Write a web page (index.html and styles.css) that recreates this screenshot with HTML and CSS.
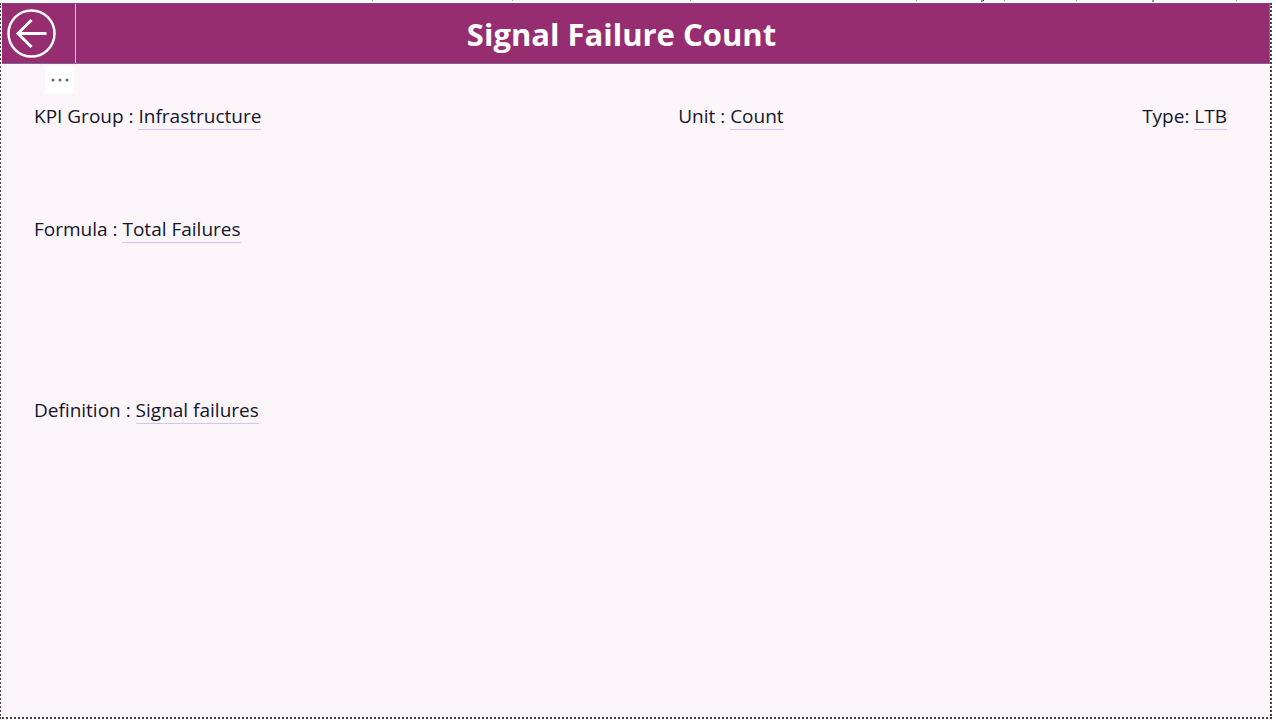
FILE: index.html
```
<!DOCTYPE html>
<html lang="en">
<head>
<meta charset="utf-8">
<meta name="viewport" content="width=device-width, initial-scale=1">
<title>Signal Failure Count</title>
<link rel="stylesheet" href="styles.css">
</head>
<body>

<!-- bottom edge of the toolbar above the report -->
<svg class="toolbar-edge" height="3" aria-hidden="true">
  <path d="M372.5 0v1M512.5 0v1M690.5 0v1M916.5 0v1M1004.5 0v1M1076.5 0v1M1236.5 0v1" stroke="#aaa"/>
  <path d="M984 0l-1 1h-2M1153 0v2" fill="none" stroke="#333"/>
</svg>

<main class="report">
  <header class="banner">
    <button class="back" type="button" aria-label="Back">
      <svg viewBox="0 0 50 50" width="50" height="50" fill="none" stroke="#fff">
        <circle cx="24.5" cy="24.5" r="23" stroke-width="2.5"/>
        <path d="M39.5 24.5H11.5M24.5 11L11 24.5l13.5 13.5" stroke-width="3"/>
      </svg>
    </button>
    <h1>Signal Failure Count</h1>
    <button class="more" type="button" aria-label="More options">
      <svg viewBox="0 0 18 4" width="18" height="4" fill="#666">
        <circle cx="2" cy="2" r="1.5"/>
        <circle cx="9" cy="2" r="1.5"/>
        <circle cx="16" cy="2" r="1.5"/>
      </svg>
    </button>
  </header>

  <section class="details">
    <div class="summary">
      <p>KPI Group : <span class="value">Infrastructure</span></p>
      <p>Unit : <span class="value">Count</span></p>
      <p>Type: <span class="value">LTB</span></p>
    </div>
    <p class="formula">Formula : <span class="value">Total Failures</span></p>
    <p class="definition">Definition : <span class="value">Signal failures</span></p>
  </section>
</main>

</body>
</html>
```

FILE: styles.css
```
* {
  box-sizing: border-box;
}
body {
  display: flex;
  flex-direction: column;
  min-height: 100vh;
  margin: 0;
  background: #fff;
  color: #14142b;
  font: 19px/24px "Open Sans", "Noto Sans", sans-serif;
}
.toolbar-edge {
  display: block;
  width: 100%;
  background: #faf8fc;
}
.report {
  flex: 1;
  margin-right: 4px;
  margin-bottom: 1px;
  margin-left: -1px;
  border: 2px dotted #444;
  border-top: 0;
  background: #fcf6fb;
}
.banner {
  position: relative;
  display: flex;
  align-items: center;
  height: 61px;
  margin-left: 1px;
  border: 1px solid #85649a;
  border-top-color: #7c4a78;
  border-left: 0;
  background: #962d70;
}
.banner h1 {
  flex: 1;
  margin: 0;
  padding-right: 102px;
  color: #fff;
  font-size: 31px;
  font-weight: 700;
  line-height: 40px;
  text-align: center;
}
.back {
  width: 74px;
  height: 100%;
  padding: 0 0 0 5px;
  border: 0;
  border-right: 1px solid #e5c6dc;
  background: none;
  text-align: left;
}
.back svg {
  display: block;
}
/* visual options button, hangs below the back button */
.more {
  position: absolute;
  top: 62px;
  left: 43px;
  display: flex;
  align-items: center;
  justify-content: center;
  width: 29px;
  height: 28px;
  padding: 0;
  border: 0;
  background: #fff;
}
.details {
  padding: 40px 43px 40px 33px;
}
.details p {
  margin: 0;
}
.summary {
  display: grid;
  grid-template-columns: 54% 1fr auto;
}
.formula {
  padding-top: 89px;
}
.definition {
  padding-top: 157px;
}
.value {
  border-bottom: 1px solid #cfc8ee;
}
```
